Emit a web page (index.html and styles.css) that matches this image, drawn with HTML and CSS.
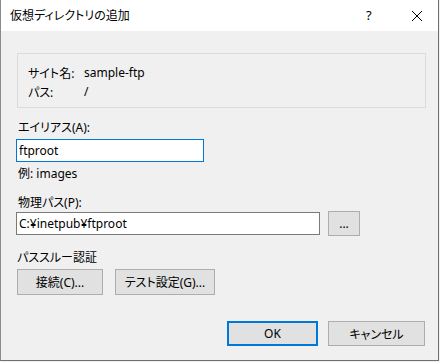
FILE: index.html
```html
<!DOCTYPE html>
<html lang="ja">
<head>
    <meta charset="utf-8">
    <title>仮想ディレクトリの追加</title>
    <link rel="stylesheet" href="styles.css">
</head>
<body>
    <div class="dialog">
        <div class="titlebar">
            <span class="title">仮想ディレクトリの追加</span>
            <span class="help">?</span>
            <span class="close">
                <svg width="12" height="12" viewBox="0 0 12 12">
                    <path d="M1 1 L11 11 M11 1 L1 11" stroke="#000" stroke-width="1" fill="none"/>
                </svg>
            </span>
        </div>

        <div class="content">
            <div class="info-box">
                <div class="info-row">
                    <span class="info-label">サイト名:</span>
                    <span>sample-ftp</span>
                </div>
                <div class="info-row">
                    <span class="info-label">パス:</span>
                    <span>/</span>
                </div>
            </div>

            <div class="label alias-label">エイリアス(A):</div>
            <input class="textbox alias focused" value="ftproot">
            <div class="label hint">例: images</div>

            <div class="label path-label">物理パス(P):</div>
            <div class="path-row">
                <input class="textbox path" value="C:¥inetpub¥ftproot">
                <button class="button browse">...</button>
            </div>

            <div class="label pass-label">パススルー認証</div>
            <div class="button-row">
                <button class="button connect">接続(C)...</button>
                <button class="button test">テスト設定(G)...</button>
            </div>

            <div class="footer">
                <button class="button ok">OK</button>
                <button class="button cancel">キャンセル</button>
            </div>
        </div>
    </div>
</body>
</html>
```

FILE: styles.css
```css
body {
    margin: 0;
    background-color: #f0f0f0;
    font-family: "Noto Sans", "Noto Sans CJK JP", sans-serif;
    font-size: 12px;
    font-feature-settings: "palt";
    color: #000000;
}

.dialog {
    width: 437px;
    height: 360px;
    background-color: #f0f0f0;
    border: 1px solid #6f6f6f;
    border-top: none;
    border-left-color: #8a8a8a;
}

.titlebar {
    display: flex;
    align-items: center;
    height: 31px;
    background-color: #ffffff;
}

.title {
    flex: 1;
    padding-left: 9px;
    margin-top: -1px;
}

.help {
    width: 12px;
    margin-right: 33px;
    font-size: 13px;
    margin-top: -1px;
}

.close {
    display: flex;
    width: 12px;
    margin-right: 15px;
}

.content {
    padding: 22px 0 0 15px;
}

.info-box {
    box-sizing: border-box;
    width: 409px;
    height: 55px;
    margin-left: 1px;
    padding: 9px 0 0 10px;
    border: 1px solid #dcdcdc;
}

.info-row {
    display: flex;
    align-items: center;
    height: 19px;
}

.info-label {
    width: 56px;
}

.label {
    height: 16px;
    line-height: 16px;
    padding-left: 2px;
}

.alias-label {
    margin-top: 12px;
}

.textbox {
    box-sizing: border-box;
    height: 23px;
    margin: 3px 0 0 0;
    padding: 0 2px;
    border: 1px solid #7a7a7a;
    background-color: #ffffff;
    font-family: inherit;
    font-size: 12px;
    font-feature-settings: "palt";
    outline: none;
}

.alias {
    display: block;
    width: 188px;
}

.focused {
    border-color: #0078d7;
}

.hint {
    margin-top: 4px;
}

.path-label {
    margin-top: 13px;
}

.path-row {
    display: flex;
    align-items: flex-start;
    gap: 8px;
}

.path {
    width: 304px;
    margin-top: 1px;
}

.button {
    box-sizing: border-box;
    height: 26px;
    padding: 0;
    border: 1px solid #adadad;
    background-color: #e1e1e1;
    font-family: inherit;
    font-size: 12px;
    font-feature-settings: "palt";
    color: #000000;
}

.browse {
    width: 32px;
    height: 25px;
}

.pass-label {
    margin-top: 14px;
    padding-left: 1px;
}

.button-row {
    display: flex;
    gap: 12px;
    margin-top: 3px;
    padding-left: 1px;
}

.connect {
    width: 86px;
}

.test {
    width: 100px;
}

.footer {
    display: flex;
    justify-content: flex-end;
    gap: 10px;
    margin-top: 26px;
    padding-right: 13px;
}

.ok {
    width: 91px;
    height: 25px;
    border: 2px solid #0078d7;
}

.cancel {
    width: 97px;
    height: 25px;
}
```
